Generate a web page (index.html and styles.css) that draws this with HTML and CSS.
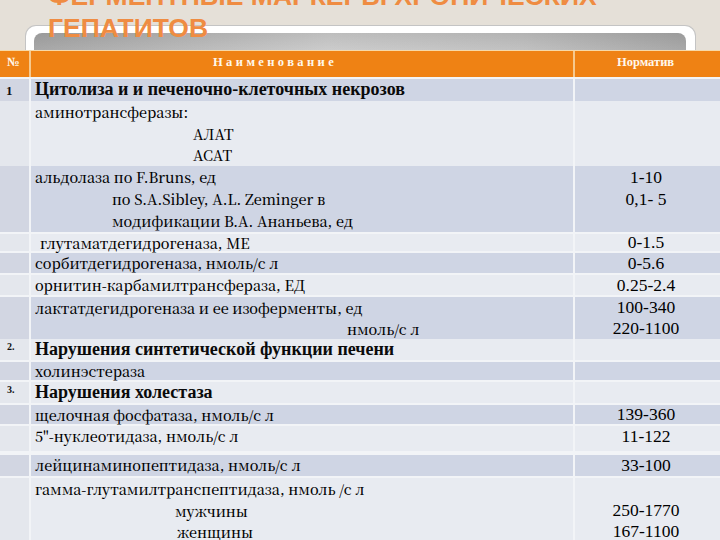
FILE: index.html
```html
<!DOCTYPE html>
<html lang="ru">
<head>
<meta charset="utf-8">
<title>Ферментные маркеры хронических гепатитов</title>
<link rel="stylesheet" href="styles.css">
</head>
<body>
<div class="sheet">
  <div class="top">
    <h1 class="title">ФЕРМЕНТНЫЕ МАРКЕРЫ ХРОНИЧЕСКИХ<br>ГЕПАТИТОВ</h1>
    <div class="frame"><div class="bar"></div></div>
  </div>
  <div class="grid">
    <div class="row head">
      <div class="c num">№</div>
      <div class="c name">Наименование</div>
      <div class="c norm">Норматив</div>
    </div>
    <div class="row dark r20">
      <div class="c num"><span class="n1">1</span></div>
      <div class="c mid b">Цитолиза и и печеночно-клеточных некрозов</div>
      <div class="c val"></div>
    </div>
    <div class="row light r63">
      <div class="c num"></div>
      <div class="c mid">
        <div>аминотрансферазы:</div>
        <div class="i158">АЛАТ</div>
        <div class="i158">АСАТ</div>
      </div>
      <div class="c val"></div>
    </div>
    <div class="row dark r66">
      <div class="c num"></div>
      <div class="c mid">
        <div>альдолаза по F.Bruns, ед</div>
        <div class="i77">по S.A.Sibley, A.L. Zeminger в</div>
        <div class="i77">модификации В.А. Ананьева, ед</div>
      </div>
      <div class="c val">
        <div>1-10</div>
        <div>0,1- 5</div>
      </div>
    </div>
    <div class="row light r17">
      <div class="c num"></div>
      <div class="c mid"><div class="i5">глутаматдегидрогеназа, МЕ</div></div>
      <div class="c val">0-1.5</div>
    </div>
    <div class="row dark r20">
      <div class="c num"></div>
      <div class="c mid">сорбитдегидрогеназа, нмоль/с л</div>
      <div class="c val">0-5.6</div>
    </div>
    <div class="row light r20">
      <div class="c num"></div>
      <div class="c mid">орнитин-карбамилтрансфераза, ЕД</div>
      <div class="c val">0.25-2.4</div>
    </div>
    <div class="row dark r40">
      <div class="c num"></div>
      <div class="c mid">
        <div>лактатдегидрогеназа и ее изоферменты, ед</div>
        <div class="i312">нмоль/с л</div>
      </div>
      <div class="c val">
        <div>100-340</div>
        <div>220-1100</div>
      </div>
    </div>
    <div class="row light r21">
      <div class="c num"><span class="n2">2.</span></div>
      <div class="c mid b">Нарушения синтетической функции печени</div>
      <div class="c val"></div>
    </div>
    <div class="row dark r18">
      <div class="c num"></div>
      <div class="c mid">холинэстераза</div>
      <div class="c val"></div>
    </div>
    <div class="row light r21">
      <div class="c num"><span class="n3">3.</span></div>
      <div class="c mid b">Нарушения холестаза</div>
      <div class="c val"></div>
    </div>
    <div class="row dark r19">
      <div class="c num"></div>
      <div class="c mid">щелочная фосфатаза, нмоль/с л</div>
      <div class="c val">139-360</div>
    </div>
    <div class="row light r25 gap4">
      <div class="c num"></div>
      <div class="c mid">5"-нуклеотидаза, нмоль/с л</div>
      <div class="c val">11-122</div>
    </div>
    <div class="row dark r21">
      <div class="c num"></div>
      <div class="c mid">лейцинаминопептидаза, нмоль/с л</div>
      <div class="c val">33-100</div>
    </div>
    <div class="row light r70">
      <div class="c num"></div>
      <div class="c mid">
        <div>гамма-глутамилтранспептидаза, нмоль /с л</div>
        <div class="i140">мужчины</div>
        <div class="i142">женщины</div>
      </div>
      <div class="c val">
        <div>&nbsp;</div>
        <div>250-1770</div>
        <div>167-1100</div>
      </div>
    </div>
  </div>
</div>
</body>
</html>
```

FILE: styles.css
```css
html, body {
  margin: 0;
  padding: 0;
  background: #f2f4f7;
}

.sheet {
  width: 720px;
  height: 540px;
  overflow: hidden;
  position: relative;
  font-family: "Liberation Serif", "Noto Serif CJK SC", serif;
  color: #111;
}

.top {
  height: 50px;
  background: #e5e0d8;
  display: flex;
  align-items: flex-end;
}

.title {
  position: absolute;
  z-index: 2;
  left: 48px;
  top: -20px;
  margin: 0;
  font-family: "Liberation Sans", Arial, sans-serif;
  font-weight: bold;
  font-size: 26.5px;
  line-height: 32px;
  color: #ef8c42;
  white-space: nowrap;
}

.frame {
  margin-left: 25px;
  width: 652px;
  height: 17px;
  padding: 7px 9px 0 8px;
  background: #ffffff;
  border: 1px solid #c4c4c4;
  border-bottom: none;
  border-radius: 11px 11px 0 0;
}

.bar {
  height: 17px;
  border-radius: 8px 8px 0 0;
  background:
    linear-gradient(to bottom, rgba(0,0,0,0.06), rgba(255,255,255,0.05)),
    linear-gradient(to right, #a3a3a3 0%, #c9c9c9 45%, #bebebe 75%, #a4a4a4 100%);
}

.grid {
  display: flex;
  flex-direction: column;
  background: #f2f4f7;
}

.row {
  display: grid;
  grid-template-columns: 29px 542px 145px;
  column-gap: 2px;
  margin-bottom: 2px;
  line-height: 21.5px;
}

.row.gap4 { margin-bottom: 4px; }

.head {
  height: 26px;
  background: #f6c98e;
  border-top: 1px solid #f7d9a8;
}
.head .c {
  background: #ef8214;
  color: #fff8ec;
  font-family: "Liberation Serif", serif;
  font-weight: bold;
  font-size: 12.5px;
  line-height: 22px;
}
.head .num { padding-left: 7px; }
.head .name {
  padding-left: 182px;
  letter-spacing: 3.4px;
}
.head .norm { text-align: center; padding-right: 4px; }

.dark .c { background: #cfd5e4; }
.light .c { background: #e8ebf1; }
.dark .num { background: #d2d6e2; }
.light .num { background: #e4e7ed; }

.c {
  overflow: visible;
  white-space: nowrap;
}

.mid {
  padding-left: 4px;
  font-family: "Noto Serif CJK SC", "Liberation Serif", serif;
  font-size: 14.4px;
  font-weight: 500;
  color: #000;
}
.mid.b {
  font-family: "Liberation Serif", serif;
  font-weight: bold;
  font-size: 18px;
  color: #0a0a0a;
}
.val {
  text-align: center;
  padding-right: 3px;
  font-family: "Liberation Serif", serif;
  font-size: 17.5px;
  color: #000;
}

.num { font-weight: bold; }
.n1 { display: block; padding-left: 6px; font-size: 13px; line-height: 24px; }
.n2, .n3 { display: block; padding-left: 7px; font-size: 10px; line-height: 16px; }

.i5 { padding-left: 5px; }
.i77 { padding-left: 77px; }
.i158 { padding-left: 158px; }
.i312 { padding-left: 312px; }
.i140 { padding-left: 140px; }
.i142 { padding-left: 142px; }

.r17 { height: 17px; line-height: 17px; }
.r18 { height: 18px; line-height: 18px; }
.r19 { height: 19px; line-height: 19px; }
.r20 { height: 20px; line-height: 20px; }
.r21 { height: 21px; line-height: 20px; }
.r25 { height: 25px; line-height: 20px; }
.r40 { height: 40px; line-height: 21px; }
.r63 { height: 63px; line-height: 21.5px; }
.r66 { height: 66px; line-height: 22px; }
.r70 { height: 70px; line-height: 21.5px; }
```
